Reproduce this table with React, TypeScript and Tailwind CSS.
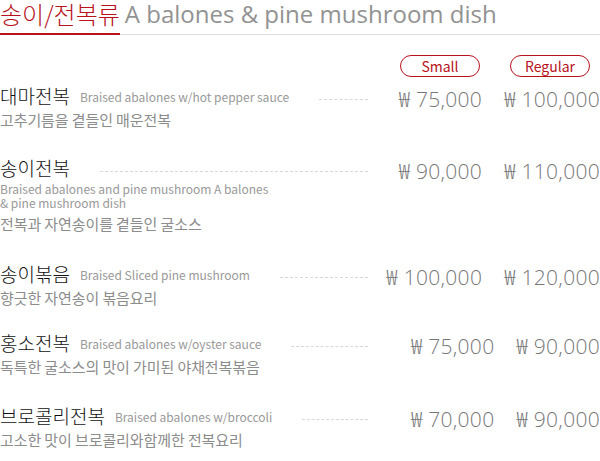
const menu = [
  {
    name: '대마전복',
    en: 'Braised abalones w/hot pepper sauce',
    ko: '고추기름을 곁들인 매운전복',
    small: '₩ 75,000',
    regular: '₩ 100,000',
    space: 'mt-[7px]',
  },
  {
    name: '송이전복',
    en: 'Braised abalones and pine mushroom A balones',
    en2: '& pine mushroom dish',
    ko: '전복과 자연송이를 곁들인 굴소스',
    small: '₩ 90,000',
    regular: '₩ 110,000',
    space: 'mt-[26px]',
  },
  {
    name: '송이볶음',
    en: 'Braised Sliced pine mushroom',
    ko: '향긋한 자연송이 볶음요리',
    small: '₩ 100,000',
    regular: '₩ 120,000',
    space: 'mt-[28px]',
  },
  {
    name: '홍소전복',
    en: 'Braised abalones w/oyster sauce',
    ko: '독특한 굴소스의 맛이 가미된 야채전복볶음',
    small: '₩ 75,000',
    regular: '₩ 90,000',
    space: 'mt-[23px]',
  },
  {
    name: '브로콜리전복',
    en: 'Braised abalones w/broccoli',
    ko: '고소한 맛이 브로콜리와함께한 전복요리',
    small: '₩ 70,000',
    regular: '₩ 90,000',
    space: 'mt-[27px]',
  },
]

type Item = (typeof menu)[number] & { en2?: string }

export default function App() {
  return (
    <div className="h-[461px] w-[600px] overflow-hidden bg-white font-['Noto_Sans_CJK_KR',sans-serif]">
      <Title />

      <div className="mt-[20px] flex justify-end gap-[30px] pr-[10px]">
        <Pill label="Small" />
        <Pill label="Regular" />
      </div>

      {menu.map((item) => (
        <MenuRow key={item.name} item={item as Item} />
      ))}
    </div>
  )
}

const Title = () => {
  return (
    <div className="flex items-end">
      <h2 className="border-b-2 border-[#b8121c] pb-[5px] text-[24px] leading-[28px] font-light text-[#b8121c]">
        송이/전복류
      </h2>
      <p className="flex-1 border-b border-[#dddddd] pb-[6px] pl-[5px] font-['Open_Sans','Noto_Sans_CJK_KR',sans-serif] text-[24px] leading-[28px] text-[#929292]">
        A balones &amp; pine mushroom dish
      </p>
    </div>
  )
}

const Pill = ({ label }: { label: string }) => {
  return (
    <span className="flex h-[22px] w-[80px] items-center justify-center rounded-full border border-[#b8121c] text-[14px] leading-none text-[#b8121c]">
      {label}
    </span>
  )
}

const MenuRow = ({ item }: { item: Item }) => {
  return (
    <div className={`flex items-start ${item.space}`}>
      <div className="w-[368px]">
        <div className="flex h-[24px] items-center">
          <span className="text-[19px] leading-[24px] font-light text-[#111]">
            {item.name}
          </span>
          {!item.en2 && (
            <span className="ml-[10px] mt-[2px] text-[12px] leading-none text-[#999]">
              {item.en}
            </span>
          )}
          <span className="ml-[30px] mt-[6px] flex-1 border-t border-dashed border-[#d8d8d8]" />
        </div>

        {item.en2 && (
          <p className="mt-[2px] text-[12px] leading-[14px] text-[#999]">
            {item.en}
            <br />
            {item.en2}
          </p>
        )}

        <p
          className={`text-[15px] leading-[20px] tracking-[-0.1px] text-[#8c8c8c] ${item.en2 ? 'mt-[4px]' : 'mt-[2px]'}`}
        >
          {item.ko}
        </p>
      </div>

      <div className="mt-[3px] flex flex-1 justify-end gap-[22px] font-['Open_Sans','Noto_Sans_CJK_KR',sans-serif] text-[21px] leading-[24px] font-light tracking-[0.3px] text-[#777]">
        <span>{item.small}</span>
        <span>{item.regular}</span>
      </div>
    </div>
  )
}
